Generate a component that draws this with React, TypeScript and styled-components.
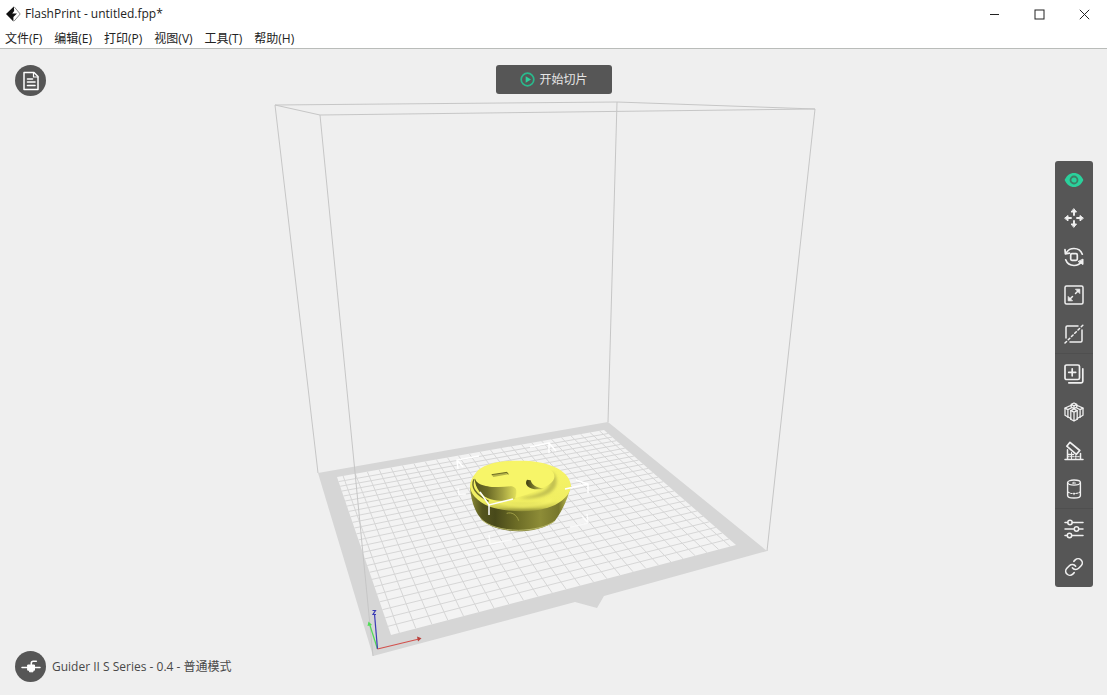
import React from "react";
import styled, { createGlobalStyle } from "styled-components";

const GlobalStyle = createGlobalStyle`
  *, *::before, *::after { box-sizing: border-box; }
  html, body { margin: 0; background: #ffffff; }
  body {
    font-family: "Open Sans", "Noto Sans CJK SC", sans-serif;
    color: #222222;
  }
  button { font: inherit; color: inherit; border: 0; padding: 0; background: none; cursor: pointer; }
`;

const AppWindow = styled.div`
  display: flex;
  flex-direction: column;
  min-height: 100vh;
  padding: 0 5px 4px 0;
`;

const Header = styled.header`
  border-bottom: 1px solid #b9bcb9;
`;

const TitleBar = styled.div`
  display: flex;
  align-items: center;
  height: 28px;
  padding-left: 5px;
`;

const Title = styled.h1`
  flex: 1;
  margin: 0 0 0 4px;
  font-size: 12px;
  line-height: 16px;
  font-weight: 400;
`;

const WindowButton = styled.button`
  display: grid;
  place-items: center;
  width: 45px;
  height: 28px;
`;

const MenuBar = styled.nav`
  display: flex;
  gap: 12px;
  height: 20px;
  padding: 2px 0 0 5px;
`;

const MenuItem = styled.button`
  font-size: 12px;
  line-height: 18px;
  white-space: nowrap;
`;

const Workspace = styled.main`
  position: relative;
  flex: 1;
  display: grid;
  grid-template-columns: 1fr auto 1fr;
  grid-template-rows: auto 1fr auto;
  padding: 16px 14px 13px 15px;
  background: #efefef;
`;

const SceneView = styled.svg`
  position: absolute;
  inset: 0;
  width: 100%;
  height: 100%;
`;

const RoundButton = styled.button`
  position: relative;
  display: grid;
  place-items: center;
  width: 31px;
  height: 31px;
  border-radius: 50%;
  background: #565656;
  color: #ffffff;
`;

const SliceButton = styled.button`
  position: relative;
  grid-column: 2;
  display: flex;
  align-items: center;
  justify-content: center;
  gap: 4px;
  width: 116px;
  height: 29px;
  border-radius: 3px;
  background: #565656;
  color: #e6e6e6;
  font-size: 12px;
  line-height: 16px;
`;

const Toolbar = styled.div`
  position: relative;
  grid-column: 3;
  grid-row: 1 / 4;
  justify-self: end;
  align-self: center;
  display: flex;
  flex-direction: column;
  width: 38px;
  height: 426px;
  border-radius: 3px;
  background: #565656;
`;

const ToolButton = styled.button<{ $active?: boolean; $divided?: boolean }>`
  flex: 1;
  display: grid;
  place-items: center;
  color: ${(p) => (p.$active ? "#2ad19c" : "#f0f0f0")};
  border-top: ${(p) => (p.$divided ? "1px solid #4f4f4f" : "0")};
`;

const StatusBar = styled.div`
  position: relative;
  grid-column: 1;
  grid-row: 3;
  display: flex;
  align-items: center;
  gap: 6px;
  font-size: 12px;
  line-height: 16px;
  color: #484848;
  white-space: nowrap;
`;

const Icon = ({ children, size = 20 }: { children: React.ReactNode; size?: number }) => (
  <svg
    width={size}
    height={size}
    viewBox="0 0 20 20"
    fill="none"
    stroke="currentColor"
    strokeWidth="1.5"
    strokeLinecap="round"
    strokeLinejoin="round"
    aria-hidden="true"
  >
    {children}
  </svg>
);

const tools: { label: string; active?: boolean; divided?: boolean; icon: React.ReactNode }[] = [
  {
    label: "查看",
    active: true,
    icon: (
      <>
        <path
          d="M.6 10C2.600 5.600 6 3 10 3s7.400 2.600 9.400 7C17.400 14.400 14 17 10 17S2.600 14.400.6 10Z"
          fill="currentColor"
          stroke="none"
        />
        <circle cx="10" cy="10" r="3.500" stroke="#3f7d66" strokeWidth="1.800" />
      </>
    ),
  },
  {
    label: "移动",
    icon: (
      <>
        <path d="M10 3v4M10 13v4M3 10h4M13 10h4" strokeWidth="1.900" />
        <path
          d="M10 .9 12.500 4h-5ZM10 19.100 12.500 16h-5ZM.9 10 4 7.500v5ZM19.100 10 16 7.500v5Z"
          fill="currentColor"
          strokeWidth="1"
        />
      </>
    ),
  },
  {
    label: "旋转",
    icon: (
      <>
        <rect x="6.700" y="6.700" width="6.600" height="6.600" rx="1.200" strokeWidth="1.700" />
        <path
          d="M2.600 5.400C4.300 2.600 7 1.500 10 1.500c3.800 0 7 2.200 8.300 5.700M17.400 14.600c-1.700 2.800-4.400 3.900-7.400 3.900-3.800 0-7-2.200-8.300-5.700"
          strokeWidth="1.700"
        />
        <path d="M1 2.600 1.400 6.800 5.500 6.200" strokeWidth="1.700" />
        <path d="M19 12.500v5l-4.600-2.800Z" fill="currentColor" strokeWidth="1" />
      </>
    ),
  },
  {
    label: "缩放",
    icon: (
      <>
        <rect x="1" y="1" width="18" height="18" rx="1.500" />
        <path d="m11.500 8.500 3-3M8.500 11.500l-3 3" />
        <path d="M11.800 4.200h4v4ZM4.200 11.800v4h4Z" fill="currentColor" strokeWidth=".8" />
      </>
    ),
  },
  {
    label: "切割",
    icon: (
      <>
        <path d="M14 2H3.200Q2 2 2 3.200V14M18 6v10.800q0 1.200-1.200 1.200H6" />
        <path d="M1 19 19.500.5" strokeDasharray="2.200 2.400" strokeWidth="1.500" />
      </>
    ),
  },
  {
    label: "复制",
    divided: true,
    icon: (
      <>
        <rect x="1" y="1" width="14.500" height="14.500" rx="1.600" strokeWidth="1.700" />
        <path d="M8.200 4.800v7M4.700 8.300h7" strokeWidth="1.700" />
        <path d="M18.800 4.800v12.400q0 1.600-1.600 1.600H4.800" strokeWidth="1.700" />
      </>
    ),
  },
  {
    label: "自动摆放",
    icon: (
      <g strokeWidth="1.300">
        <path d="M10 1 12.800 2.400v2.800L10 6.600 7.200 5.200V2.400ZM7.200 2.400 10 3.800l2.800-1.400M10 3.800v2.800" />
        <path d="M7.200 3.400 4.400 4.500M12.800 3.400l2.800 1.100M4.400 4.500 1 6.200v7L4 15M15.600 4.500 19 6.200v7L16 15" />
        <path d="M1 6.200 3.900 7.600 7.200 6M19 6.200l-2.900 1.400L12.800 6M3.900 7.600V15M16.100 7.600V15M6.800 8.600v8.700M13.200 8.600v8.700" />
        <path d="M6.800 8.600 10 7l3.200 1.600L10 10.200ZM10 10.200V19M6.800 17.300 10 19l3.200-1.700M3.900 15l2.900 1.400M16.100 15l-2.900 1.400" />
      </g>
    ),
  },
  {
    label: "支撑",
    icon: (
      <>
        <path d="M6 1.300 15.800 9.500 12.300 13.300 2.800 5.200Z" strokeWidth="1.700" />
        <path d="M1 18.500h18M3.500 8.800v9.500M16.500 12.500v5.500M3.500 13.500h6" strokeWidth="1.500" />
        <path d="M7.500 11.500v6.500M11.800 14.500v3.500M3.500 15.700h13" strokeWidth="1" strokeDasharray="1.500 1" />
      </>
    ),
  },
  {
    label: "模型修复",
    icon: (
      <>
        <ellipse cx="10" cy="3.600" rx="6.400" ry="2.600" strokeWidth="1.300" />
        <path d="M3.600 3.600v12.800c0 1.500 2.900 2.600 6.400 2.600s6.400-1.100 6.400-2.600V3.600" strokeWidth="1.400" />
        <path d="M4 13c1.500 1.200 3.500 1.500 6 1.500s4.500-.3 6-1.500M10 3v2M10 14v2M8.500 4h3" strokeWidth="1.100" strokeDasharray="1.600 1.300" />
      </>
    ),
  },
  {
    label: "参数",
    divided: true,
    icon: (
      <g strokeWidth="1.500">
        <path d="M1 3.500h2.700M8.300 3.500H19M1 10h9.200M14.800 10H19M1 16.500h2.200M7.800 16.500H19" />
        <circle cx="6" cy="3.500" r="2.200" />
        <circle cx="12.500" cy="10" r="2.200" />
        <circle cx="5.500" cy="16.500" r="2.200" />
      </g>
    ),
  },
  {
    label: "连接",
    icon: (
      <g transform="scale(.83333)" strokeWidth="1.900">
        <path d="M10 13a5 5 0 0 0 7.540.54l3-3a5 5 0 0 0-7.070-7.070l-1.720 1.710" />
        <path d="M14 11a5 5 0 0 0-7.540-.54l-3 3a5 5 0 0 0 7.070 7.070l1.710-1.710" />
      </g>
    ),
  },
];

type Point = [number, number];

// Projects the unit square onto the quad a (0,0), b (1,0), c (1,1), d (0,1).
const projector = ([a, b, c, d]: Point[]) => {
  const sx = a[0] - b[0] + c[0] - d[0];
  const sy = a[1] - b[1] + c[1] - d[1];
  const dx1 = b[0] - c[0];
  const dx2 = d[0] - c[0];
  const dy1 = b[1] - c[1];
  const dy2 = d[1] - c[1];
  const det = dx1 * dy2 - dx2 * dy1;
  const g = (sx * dy2 - dx2 * sy) / det;
  const h = (dx1 * sy - sx * dy1) / det;
  return (u: number, v: number): string => {
    const w = g * u + h * v + 1;
    const x = ((b[0] - a[0] + g * b[0]) * u + (d[0] - a[0] + h * d[0]) * v + a[0]) / w;
    const y = ((b[1] - a[1] + g * b[1]) * u + (d[1] - a[1] + h * d[1]) * v + a[1]) / w;
    return `${x.toFixed(1)} ${y.toFixed(1)}`;
  };
};

const CELLS = 25;
const project = projector([
  [391, 635],
  [736, 545],
  [604, 430],
  [337, 477],
]);

const gridPath = () => {
  const parts: string[] = [];
  for (let i = 0; i < CELLS; i++) {
    const u = (i + 0.5) / CELLS;
    parts.push(`M${project(u, 0)}L${project(u, 1)}`);
  }
  for (let i = 1; i < CELLS; i++) {
    const v = i / CELLS;
    parts.push(`M${project(0, v)}L${project(1, v)}`);
  }
  return parts.join("");
};

const Model = () => (
  <g transform="translate(440 430) scale(.33333)">
    <path
      d="M90 172C92 205 102 240 120 262C140 288 180 302 232 304C275 304 320 293 345 272C365 245 385 205 392 168L300 150H150Z"
      fill="url(#side)"
    />
    <path d="M122 266C145 289 185 300 235 301C280 300 318 291 343 274" fill="none" stroke="#b9b96c" strokeWidth="3" />
    <path
      d="M90 172C94 198 122 224 165 235C230 250 300 246 345 225C377 208 393 186 393 166C388 128 345 100 268 93C190 88 130 100 108 128C96 142 89 156 90 172Z"
      fill="url(#rim)"
    />
    <g filter="url(#soft)">
      <path
        d="M336 124C356 142 356 172 329 189C304 204 265 208 235 204C285 198 318 186 328 166C336 150 338 136 336 124Z"
        fill="#a3a142"
        opacity=".6"
      />
      <path d="M180 217C225 232 290 230 335 212" fill="none" stroke="#f9f76c" strokeWidth="6" />
    </g>
    <path d="M104 146C106 176 124 198 152 208C185 216 212 212 226 206L232 160Z" fill="url(#tower)" />
    <path d="M102 148C92 170 104 192 146 214" fill="none" stroke="#45451a" strokeWidth="4" opacity=".8" />
    <path
      d="M105 143C108 117 145 103 190 100C235 96 290 100 322 115C350 128 350 148 326 164C305 176 278 190 226 204C236 184 228 168 210 169C165 175 106 170 105 143Z"
      fill="#f7f568"
    />
    <path d="M155 134 201 127 205 133 160 141Z" fill="#b5b34a" />
    <path d="M155 134 201 127 205 133" fill="none" stroke="#595819" strokeWidth="2.500" />
    <path d="M261 149C250 166 270 184 314 176C287 174 275 163 272 151Z" fill="url(#notch)" />
    <path d="M200 250C215 245 230 254 236 272" fill="none" stroke="#a09f45" strokeWidth="3" />
  </g>
);

const Scene = () => (
  <SceneView viewBox="0 49 1107 646" role="img" aria-label="打印平台">
    <defs>
      <linearGradient id="side" x1="0" y1="0" x2="1" y2="0">
        <stop offset="0" stopColor="#8d8c37" />
        <stop offset=".12" stopColor="#55551f" />
        <stop offset=".25" stopColor="#48491a" />
        <stop offset=".45" stopColor="#6a6a25" />
        <stop offset=".7" stopColor="#8d8c37" />
        <stop offset=".88" stopColor="#77762c" />
        <stop offset="1" stopColor="#c6c552" />
      </linearGradient>
      <linearGradient id="rim" x1="0" y1="0" x2="0" y2="1">
        <stop offset="0" stopColor="#f7f568" />
        <stop offset=".8" stopColor="#f0ee62" />
        <stop offset=".92" stopColor="#cfcd51" />
        <stop offset="1" stopColor="#8f8e36" />
      </linearGradient>
      <linearGradient id="tower" x1="0" y1="0" x2="1" y2="0">
        <stop offset="0" stopColor="#55551d" />
        <stop offset=".3" stopColor="#6b6a26" />
        <stop offset=".65" stopColor="#a3a141" />
        <stop offset="1" stopColor="#e6e45d" />
      </linearGradient>
      <linearGradient id="notch" x1="0" y1="0" x2="1" y2="0">
        <stop offset="0" stopColor="#3e3d10" />
        <stop offset=".4" stopColor="#77762b" />
        <stop offset="1" stopColor="#efed62" />
      </linearGradient>
      <filter id="soft">
        <feGaussianBlur stdDeviation="4" />
      </filter>
    </defs>

    <path d="M318 473 608 422 767 551 604 596 597 608 575 602 373 656Z" fill="#d6d6d6" />
    <path d="M391 635 736 545 604 430 337 477Z" fill="#f3f3f3" />
    <path d={gridPath()} fill="none" stroke="#d6d6d6" strokeWidth="1" />

    <g fill="none" stroke="#c6c6c6" strokeWidth="1">
      <path d="M275 105 617 102 815 109 320 115Z" />
      <path d="M275 105 318 473M617 102 608 422M815 109 767 551M320 115 373 656" />
    </g>

    <g fill="none" stroke="#ffffff" strokeWidth="1.500">
      <path d="M479 456 457 460 458 469M457 460 463 467M530 447 549 443 549 453M549 443 556 451" />
      <path d="M576 480 588 484 588 493" />
      <path
        d="M458 488 459 495 466 494M588 523 587 514M588 523 582 516M588 523 570 527M489 535 490 544 512 540"
        opacity=".8"
      />
    </g>
    <Model />
    <path d="M480 492 489 505 513 499M489 505 489 515M565 489 588 484" fill="none" stroke="#ffffff" strokeWidth="1.500" />

    <g fill="none" strokeWidth="1.200">
      <path d="M377.500 649 369.500 624" stroke="#4fdc55" />
      <path d="M377.500 649 374.500 614" stroke="#3b3bb5" />
      <path d="M377.500 649 419 639" stroke="#d2504c" />
    </g>
    <path d="M367.500 626 368.500 621.500 372 625Z" fill="#4fdc55" />
    <path d="M417 636.500 421.500 638.300 418 641.500Z" fill="#b8403c" />
    <path d="M372.500 610.500H375.500L373 614.500H376" fill="none" stroke="#3b3bb5" strokeWidth="1.200" />
  </SceneView>
);

export default function App() {
  return (
    <>
      <GlobalStyle />
      <AppWindow>
        <Header>
          <TitleBar>
            <svg width="16" height="16" viewBox="0 0 16 16" aria-hidden="true">
              <path d="M9.200.8 15.200 8 9 15.200" fill="none" stroke="#8a8a8a" strokeWidth="1" />
              <path d="M8.800.5 1 8l7.400 7.500V11L12 7.500H7.200L9.200 5Z" fill="#111111" />
            </svg>
            <Title>FlashPrint - untitled.fpp*</Title>
            <WindowButton aria-label="最小化">
              <svg width="11" height="11" viewBox="0 0 11 11" stroke="#222222">
                <path d="M1 5.500h9" />
              </svg>
            </WindowButton>
            <WindowButton aria-label="最大化">
              <svg width="11" height="11" viewBox="0 0 11 11" fill="none" stroke="#222222">
                <rect x="1" y="1" width="9" height="9" />
              </svg>
            </WindowButton>
            <WindowButton aria-label="关闭">
              <svg width="11" height="11" viewBox="0 0 11 11" stroke="#222222">
                <path d="m.8.8 9.400 9.400M10.200.8.800 10.200" />
              </svg>
            </WindowButton>
          </TitleBar>
          <MenuBar>
            {["文件(F)", "编辑(E)", "打印(P)", "视图(V)", "工具(T)", "帮助(H)"].map((item) => (
              <MenuItem key={item}>{item}</MenuItem>
            ))}
          </MenuBar>
        </Header>

        <Workspace>
          <Scene />
          <RoundButton aria-label="文件">
            <Icon>
              <path d="M3 1.500h10l4 4v13H3Z" />
              <path d="M12.500 2v4H17" strokeWidth="1.200" />
              <path d="M6.500 8h5M6.500 11h7.500M6.500 14.500h7.500" strokeWidth="1.600" />
            </Icon>
          </RoundButton>

          <SliceButton>
            <svg width="15" height="15" viewBox="0 0 15 15" aria-hidden="true">
              <circle cx="7.500" cy="7.500" r="6.300" fill="none" stroke="#2ab88c" strokeWidth="1.700" />
              <path d="M5.700 4.300 11 7.500l-5.300 3.200Z" fill="#2ad19c" />
            </svg>
            开始切片
          </SliceButton>

          <Toolbar role="toolbar" aria-label="工具">
            {tools.map((tool) => (
              <ToolButton key={tool.label} aria-label={tool.label} $active={tool.active} $divided={tool.divided}>
                <Icon>{tool.icon}</Icon>
              </ToolButton>
            ))}
          </Toolbar>

          <StatusBar>
            <RoundButton aria-label="连接打印机">
              <Icon>
                <path d="M1 10.500h18" strokeWidth="1.500" />
                <path d="M7 8h6.500v5.200h-1.500v1.600H8.500v-1.600H7Z" fill="currentColor" strokeWidth="1" />
                <path d="M10.300 8V6.200q0-2 2-2h3" strokeWidth="1.600" />
              </Icon>
            </RoundButton>
            <span>Guider II S Series - 0.4 - 普通模式</span>
          </StatusBar>
        </Workspace>
      </AppWindow>
    </>
  );
}
